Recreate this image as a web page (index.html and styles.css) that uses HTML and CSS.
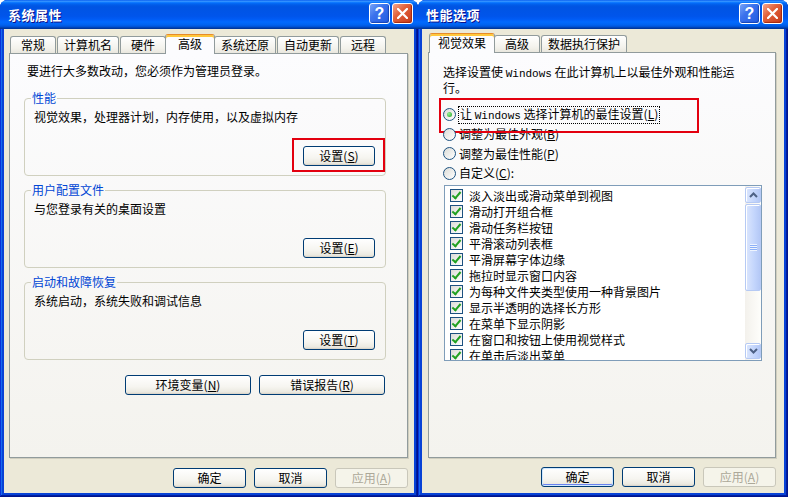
FILE: index.html
```html
<!DOCTYPE html>
<html lang="zh-CN">
<head>
  <meta charset="UTF-8">
  <meta name="viewport" content="width=device-width, initial-scale=1.0">
  <title>系统属性 / 性能选项</title>
  <link rel="stylesheet" href="styles.css">
</head>
<body>
  <div class="desktop">

    <!-- 系统属性 -->
    <div class="window win-system">
      <div class="titlebar">
        <span class="title">系统属性</span>
        <div class="title-buttons">
          <span class="tbtn help">?</span>
          <span class="tbtn close">
            <svg width="11" height="11" viewBox="0 0 11 11"><path d="M1 1L10 10M10 1L1 10" stroke="#fff" stroke-width="2.2" stroke-linecap="square"/></svg>
          </span>
        </div>
      </div>
      <div class="window-body">
        <div class="tabs">
          <span class="tab">常规</span>
          <span class="tab">计算机名</span>
          <span class="tab">硬件</span>
          <span class="tab active">高级</span>
          <span class="tab">系统还原</span>
          <span class="tab">自动更新</span>
          <span class="tab">远程</span>
        </div>
        <div class="tab-panel panel-system">
          <p class="intro">要进行大多数改动，您必须作为管理员登录。</p>

          <fieldset class="group">
            <legend>性能</legend>
            <p>视觉效果，处理器计划，内存使用，以及虚拟内存</p>
            <div class="group-actions">
              <button class="btn btn-small marked">设置(<u>S</u>)</button>
            </div>
          </fieldset>

          <fieldset class="group">
            <legend>用户配置文件</legend>
            <p>与您登录有关的桌面设置</p>
            <div class="group-actions">
              <button class="btn btn-small">设置(<u>E</u>)</button>
            </div>
          </fieldset>

          <fieldset class="group">
            <legend>启动和故障恢复</legend>
            <p>系统启动，系统失败和调试信息</p>
            <div class="group-actions">
              <button class="btn btn-small">设置(<u>T</u>)</button>
            </div>
          </fieldset>

          <div class="panel-actions">
            <button class="btn btn-wide">环境变量(<u>N</u>)</button>
            <button class="btn btn-wide">错误报告(<u>R</u>)</button>
          </div>
        </div>
        <div class="dialog-actions">
          <button class="btn">确定</button>
          <button class="btn">取消</button>
          <button class="btn" disabled>应用(<u>A</u>)</button>
        </div>
      </div>
    </div>

    <!-- 性能选项 -->
    <div class="window win-perf">
      <div class="titlebar">
        <span class="title">性能选项</span>
        <div class="title-buttons">
          <span class="tbtn help">?</span>
          <span class="tbtn close">
            <svg width="11" height="11" viewBox="0 0 11 11"><path d="M1 1L10 10M10 1L1 10" stroke="#fff" stroke-width="2.2" stroke-linecap="square"/></svg>
          </span>
        </div>
      </div>
      <div class="window-body">
        <div class="tabs">
          <span class="tab active">视觉效果</span>
          <span class="tab">高级</span>
          <span class="tab">数据执行保护</span>
        </div>
        <div class="tab-panel panel-perf">
          <p class="desc">选择设置使 <span class="latin">Windows</span> 在此计算机上以最佳外观和性能运<br>行。</p>

          <div class="radios">
            <div class="radio-row marked-row">
              <span class="radio checked"></span>
              <span class="focus">让 <span class="latin">Windows</span> 选择计算机的最佳设置(<u>L</u>)</span>
            </div>
            <div class="radio-row">
              <span class="radio"></span>
              <span>调整为最佳外观(<u>B</u>)</span>
            </div>
            <div class="radio-row">
              <span class="radio"></span>
              <span>调整为最佳性能(<u>P</u>)</span>
            </div>
            <div class="radio-row">
              <span class="radio"></span>
              <span>自定义(<u>C</u>):</span>
            </div>
          </div>

          <div class="listbox">
            <ul class="list-items">
              <li><span class="check"></span>淡入淡出或滑动菜单到视图</li>
              <li><span class="check"></span>滑动打开组合框</li>
              <li><span class="check"></span>滑动任务栏按钮</li>
              <li><span class="check"></span>平滑滚动列表框</li>
              <li><span class="check"></span>平滑屏幕字体边缘</li>
              <li><span class="check"></span>拖拉时显示窗口内容</li>
              <li><span class="check"></span>为每种文件夹类型使用一种背景图片</li>
              <li><span class="check"></span>显示半透明的选择长方形</li>
              <li><span class="check"></span>在菜单下显示阴影</li>
              <li><span class="check"></span>在窗口和按钮上使用视觉样式</li>
              <li><span class="check"></span>在单击后淡出菜单</li>
            </ul>
            <div class="scrollbar">
              <span class="sb-btn">
                <svg width="9" height="6" viewBox="0 0 9 6"><path d="M1 5L4.5 1.5L8 5" fill="none" stroke="#4D6185" stroke-width="2"/></svg>
              </span>
              <span class="sb-thumb"><span class="grip"></span></span>
              <span class="sb-track"></span>
              <span class="sb-btn">
                <svg width="9" height="6" viewBox="0 0 9 6"><path d="M1 1L4.5 4.5L8 1" fill="none" stroke="#4D6185" stroke-width="2"/></svg>
              </span>
            </div>
          </div>
        </div>
        <div class="dialog-actions">
          <button class="btn btn-default">确定</button>
          <button class="btn">取消</button>
          <button class="btn" disabled>应用(<u>A</u>)</button>
        </div>
      </div>
    </div>

  </div>
</body>
</html>
```

FILE: styles.css
```css
* {
  box-sizing: border-box;
  margin: 0;
  padding: 0;
}

body {
  background: #fff;
  font-family: "Noto Sans CJK SC", "Noto Sans", sans-serif;
  font-size: 12px;
  color: #000;
}

.desktop {
  display: flex;
  width: 788px;
  height: 497px;
}

/* window frame */

.window {
  display: flex;
  flex-direction: column;
  height: 497px;
  background: #0842d6;
  border-radius: 8px 8px 0 0;
  box-shadow:
    inset -1px -1px #00138c,
    inset 1px 0 #0831d9,
    inset -2px -2px #001ea0,
    inset 2px 0 #166aee;
}

.win-system {
  width: 418px;
}

.win-perf {
  width: 370px;
}

.titlebar {
  height: 29px;
  display: flex;
  align-items: flex-start;
  justify-content: space-between;
  padding: 3px 5px 0 8px;
  border-radius: 7px 7px 0 0;
  background: linear-gradient(to bottom,
    #0058ee 0%, #3a93ff 4%, #288eff 6%, #127dff 8%, #036ffc 10%,
    #0262ee 14%, #0057e5 20%, #0054e3 24%, #0055eb 56%, #005bf5 66%,
    #026afe 76%, #0062ef 86%, #0052d6 92%, #0040ab 96%, #003092 100%);
}

.title {
  color: #fff;
  font-weight: bold;
  font-size: 13px;
  line-height: 23px;
  letter-spacing: 0.5px;
  text-shadow: 1px 1px #0f1089;
}

.title-buttons {
  display: flex;
  gap: 2px;
}

.tbtn {
  width: 21px;
  height: 21px;
  display: flex;
  align-items: center;
  justify-content: center;
  border: 1px solid #fff;
  border-radius: 3px;
  color: #fff;
  font-family: "Liberation Sans", sans-serif;
  font-weight: bold;
  font-size: 16px;
  line-height: 1;
}

.help {
  background: linear-gradient(135deg, #78a4f8 0%, #3b72ec 40%, #2259e0 100%);
  box-shadow: inset -1px -1px 1px #1644b6;
}

.close {
  background: linear-gradient(135deg, #f3a68e 0%, #e2613a 40%, #c6391a 100%);
  box-shadow: inset -1px -1px 1px #a52a0e;
}

.window-body {
  flex: 1;
  display: flex;
  flex-direction: column;
  margin: 0 4px 4px;
  padding: 5px 6px 5px 5px;
  background: #ece9d8;
}

.win-perf .window-body {
  padding: 4px 8px 6px 6px;
}

/* tabs */

.tabs {
  display: flex;
  align-items: flex-end;
  height: 20px;
  margin-bottom: -1px;
  padding-left: 1px;
  position: relative;
  z-index: 1;
}

.tab {
  height: 17px;
  min-width: 46px;
  margin: 0 1px 1px 0;
  padding: 0 6px;
  text-align: center;
  line-height: 16px;
  border: 1px solid #919b9c;
  border-bottom: none;
  border-radius: 3px 3px 0 0;
  background: linear-gradient(to bottom, #fff, #f3f2ec 70%, #e9e7de);
}

.tab.active {
  height: 20px;
  min-width: 50px;
  margin: 0 -1px 0 -2px;
  padding: 0 8px;
  line-height: 17px;
  background: #fcfcfe;
  border-top: 1px solid #e68b2c;
  box-shadow: inset 0 2px #ffc83c;
  position: relative;
  z-index: 2;
}

.win-perf .tab.active {
  margin-left: 0;
}

.tab-panel {
  flex: 1;
  border: 1px solid #919b9c;
  background: linear-gradient(to bottom, #fcfcfe, #f4f3ee);
  box-shadow: 1px 1px 0 #d0cebf;
}

/* 系统属性 panel */

.panel-system {
  padding: 10px 21px 0 14px;
}

.intro {
  line-height: 14px;
  margin: 0 0 14px 3px;
}

.group {
  border: 1px solid #d0d0bf;
  border-radius: 4px;
  padding: 6px 10px 9px 9px;
  margin-bottom: 8px;
}

.group legend {
  color: #0046d5;
  line-height: 12px;
  padding: 0 1px;
  margin-left: -3px;
}

.group p {
  line-height: 14px;
}

.group-actions {
  display: flex;
  justify-content: flex-end;
  margin-top: 22px;
}

.panel-actions {
  display: flex;
  justify-content: flex-end;
  gap: 8px;
  margin: 15px 1px 0 0;
}

/* buttons */

.btn {
  width: 73px;
  height: 20px;
  font-family: inherit;
  font-size: 12px;
  line-height: 16px;
  color: #000;
  border: 1px solid #003c74;
  border-radius: 3px;
  background: linear-gradient(to bottom, #fff 0%, #f6f5f0 60%, #ebe9e0 90%, #d6d0c5 100%);
  overflow: visible;
}

.btn-small {
  width: 72px;
}

.btn-wide {
  width: 126px;
}

.btn-default {
  box-shadow:
    inset 0 0 0 1px #cee7ff,
    inset 0 -2px 0 #6982ee,
    inset 1px 0 0 #a8c6f8,
    inset -1px 0 0 #a8c6f8;
}

.btn:disabled {
  color: #aca899;
  border-color: #c9c7ba;
  background: #f5f4ea;
}

.dialog-actions {
  display: flex;
  justify-content: flex-end;
  gap: 8px;
  margin-top: 10px;
}

.win-perf .dialog-actions {
  margin-top: 9px;
}

/* red annotation boxes */

.marked {
  position: relative;
}

.marked::after {
  content: "";
  position: absolute;
  left: -12px;
  right: -11px;
  top: -9px;
  bottom: -7px;
  border: 2px solid #e3000f;
  pointer-events: none;
}

.marked-row {
  position: relative;
}

.marked-row::after {
  content: "";
  position: absolute;
  left: -4px;
  top: -7px;
  width: 256px;
  height: 31px;
  border: 2px solid #e3000f;
  pointer-events: none;
}

/* 性能选项 panel */

.panel-perf {
  padding: 12px 0 0 14px;
}

.desc {
  line-height: 13px;
}

.latin {
  font-family: "Liberation Mono", monospace;
  font-size: 11px;
}

.radios {
  margin-top: 11px;
}

.radio-row {
  display: flex;
  align-items: center;
  gap: 3px;
  height: 19.5px;
  line-height: 14px;
}

.radio {
  flex: none;
  width: 13px;
  height: 13px;
  border: 1px solid #1c5180;
  border-radius: 50%;
  background: linear-gradient(135deg, #dcdcd7, #fff);
  position: relative;
}

.radio.checked::after {
  content: "";
  position: absolute;
  left: 3px;
  top: 3px;
  width: 5px;
  height: 5px;
  border-radius: 50%;
  background: radial-gradient(circle at 35% 35%, #94f194, #21a121);
}

.focus {
  outline: 1px dotted #000;
  padding: 0 1px;
}

.listbox {
  display: flex;
  width: 318px;
  height: 176px;
  margin: 2px 0 0 1px;
  border: 1px solid #7f9db9;
  background: #fff;
  overflow: hidden;
}

.list-items {
  flex: 1;
  list-style: none;
  padding: 1px 0 0 5px;
}

.list-items li {
  display: flex;
  align-items: center;
  gap: 6px;
  height: 16px;
  white-space: nowrap;
}

.check {
  flex: none;
  width: 13px;
  height: 13px;
  border: 1px solid #1c5180;
  background: linear-gradient(135deg, #dcdcd7, #fff);
  position: relative;
}

.check::after {
  content: "";
  position: absolute;
  left: 3px;
  top: 0;
  width: 3px;
  height: 7px;
  border: solid #21a121;
  border-width: 0 2px 2px 0;
  transform: rotate(40deg);
}

.scrollbar {
  flex: none;
  width: 16px;
  display: flex;
  flex-direction: column;
  background: linear-gradient(to right, #f3f1ec, #fefefb);
  padding: 1px 0;
}

.sb-btn,
.sb-thumb {
  border: 1px solid #b6caf4;
  border-radius: 2px;
  background: linear-gradient(to right, #dbe6fd, #c3d5fc 60%, #b4c8f6);
  box-shadow: inset 1px 1px #fff;
}

.sb-btn {
  height: 16px;
  display: flex;
  align-items: center;
  justify-content: center;
}

.sb-thumb {
  height: 87px;
  margin-top: 1px;
  display: flex;
  align-items: center;
  justify-content: center;
}

.grip {
  width: 7px;
  height: 7px;
  background: repeating-linear-gradient(to bottom, #eef4fe 0 1px, #8cb0f8 1px 2px);
}

.sb-track {
  flex: 1;
}
```
